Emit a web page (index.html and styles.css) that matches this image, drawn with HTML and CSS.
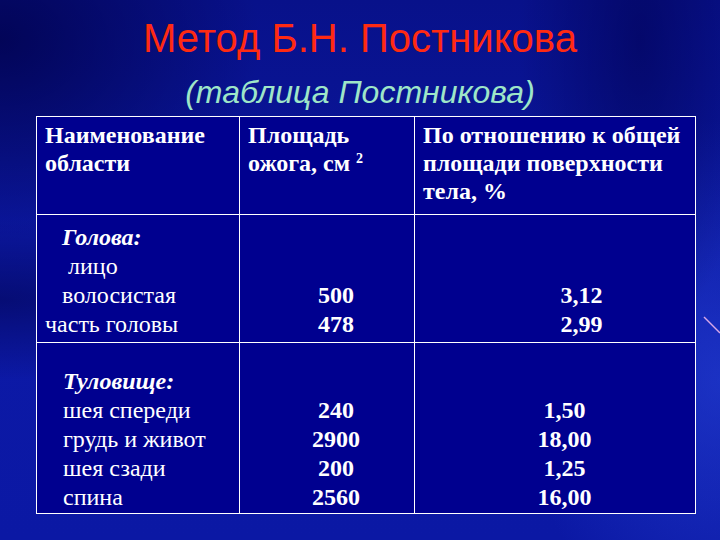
FILE: index.html
```html
<!DOCTYPE html>
<html lang="ru">
<head>
<meta charset="utf-8">
<title>Метод Б.Н. Постникова</title>
<link rel="stylesheet" href="styles.css">
</head>
<body>
<div class="slide">
  <h1 class="title">Метод Б.Н. Постникова</h1>
  <p class="subtitle">(таблица Постникова)</p>
  <table class="grid">
    <colgroup>
      <col class="c1"><col class="c2"><col class="c3">
    </colgroup>
    <tr class="head">
      <th>Наименование<br>области</th>
      <th>Площадь<br>ожога, см <sup>2</sup></th>
      <th>По отношению к общей<br>площади поверхности<br>тела, %</th>
    </tr>
    <tr class="r1">
      <td class="name">
        <div class="ind1 group">Голова:</div>
        <div class="ind2">лицо</div>
        <div class="ind1">волосистая</div>
        <div>часть головы</div>
      </td>
      <td class="val v2">500<br>478</td>
      <td class="val v3a">3,12<br>2,99</td>
    </tr>
    <tr class="r2">
      <td class="name">
        <div class="ind3 group">Туловище:</div>
        <div class="ind3">шея спереди</div>
        <div class="ind3">грудь и живот</div>
        <div class="ind3">шея сзади</div>
        <div class="ind3">спина</div>
      </td>
      <td class="val v2">240<br>2900<br>200<br>2560</td>
      <td class="val v3b">1,50<br>18,00<br>1,25<br>16,00</td>
    </tr>
  </table>
  <svg class="streak" width="20" height="40" viewBox="0 0 20 40">
    <line x1="2" y1="17" x2="18" y2="33" stroke="#d9a8e8" stroke-width="1.5"/>
  </svg>
</div>
</body>
</html>
```
FILE: styles.css
```css
* { box-sizing: border-box; }
html, body { margin: 0; padding: 0; }
body {
  width: 720px;
  height: 540px;
  overflow: hidden;
  background: #0a149c;
}
.slide {
  position: relative;
  width: 720px;
  height: 540px;
  overflow: hidden;
  background:
    radial-gradient(ellipse 260px 200px at 0 40px, rgba(0,0,70,0.75), rgba(0,0,70,0) 100%),
    radial-gradient(ellipse 120px 300px at 640px 40px, rgba(0,0,80,0.55), rgba(0,0,80,0) 100%),
    radial-gradient(ellipse 200px 260px at 720px 380px, rgba(40,70,220,0.55), rgba(40,70,220,0) 100%),
    radial-gradient(ellipse 300px 80px at 0 300px, rgba(0,0,70,0.5), rgba(0,0,70,0) 100%),
    linear-gradient(180deg, #08118a 0%, #0c19a6 60%, #0b18a4 100%);
  padding-top: 13px;
}
.title {
  margin: 0;
  font-family: "Liberation Sans", Arial, sans-serif;
  font-weight: normal;
  font-size: 40px;
  line-height: 50px;
  color: #ff2a12;
  text-align: center;
}
.subtitle {
  margin: 10px 0 0;
  font-family: "Liberation Sans", Arial, sans-serif;
  font-style: italic;
  font-size: 32px;
  line-height: 38px;
  color: #9ee6c8;
  text-align: center;
}
.grid {
  margin: 5px 0 0 36px;
  border-collapse: collapse;
  table-layout: fixed;
  width: 659px;
  background: #00008f;
  font-family: "Liberation Serif", "Times New Roman", serif;
  font-size: 24px;
  color: #ffffff;
}
.grid th, .grid td {
  border: 1px solid #ffffff;
  padding: 0 2px 0 8px;
}
.c1 { width: 203px; }
.c2 { width: 175px; }
.c3 { width: 281px; }
.head th {
  height: 98px;
  vertical-align: top;
  text-align: left;
  font-weight: bold;
  line-height: 28px;
  padding-top: 4px;
  white-space: nowrap;
}
.head sup {
  font-size: 14px;
  vertical-align: 0.6em;
  line-height: 0;
}
.r1 td, .r2 td {
  vertical-align: bottom;
  line-height: 29px;
  white-space: nowrap;
}
.r1 td { height: 128px; padding-bottom: 3px; }
.r2 td { height: 171px; padding-bottom: 1px; }
.name { font-weight: normal; }
.group { font-weight: bold; font-style: italic; }
.ind1 { padding-left: 17px; }
.ind2 { padding-left: 23px; }
.ind3 { padding-left: 18px; }
.val { font-weight: bold; text-align: center; }
.grid td.v2 { padding-left: 18px; padding-right: 0; }
.grid td.v3a { padding-left: 53px; padding-right: 0; }
.grid td.v3b { padding-left: 19px; padding-right: 0; }
.streak {
  position: absolute;
  left: 702px;
  top: 300px;
}
```
